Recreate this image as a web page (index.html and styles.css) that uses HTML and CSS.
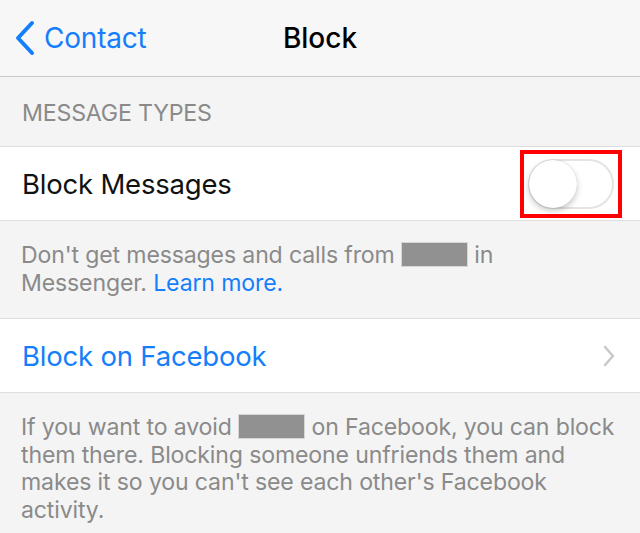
FILE: index.html
```html
<!DOCTYPE html>
<html>
<head>
<meta charset="utf-8">
<link rel="stylesheet" href="styles.css">
</head>
<body>
<header class="nav">
  <a class="back">
    <svg class="back-icon" width="22" height="36" viewBox="0 0 22 36"><path d="M18 3 L4 18 L18 33" fill="none" stroke="#147efb" stroke-width="4" stroke-linecap="round" stroke-linejoin="round"/></svg>
    <span>Contact</span>
  </a>
  <h1 class="title">Block</h1>
  <span></span>
</header>
<div class="section-head">MESSAGE TYPES</div>
<div class="row">
  <span class="row-label">Block Messages</span>
  <span class="highlight">
    <span class="switch"><span class="knob"></span></span>
  </span>
</div>
<p class="footnote">Don't get messages and calls from <span class="redact"></span> in Messenger. <span class="link">Learn more.</span></p>
<div class="row">
  <span class="row-label link">Block on Facebook</span>
  <svg class="chev" width="14" height="24" viewBox="0 0 14 24"><path d="M3 3 L11 12 L3 21" fill="none" stroke="#c7c7cc" stroke-width="2.5" stroke-linecap="round" stroke-linejoin="round"/></svg>
</div>
<p class="footnote">If you want to avoid <span class="redact"></span> on Facebook, you can block them there. Blocking someone unfriends them and makes it so you can't see each other's Facebook activity.</p>
</body>
</html>
```
FILE: styles.css
```css
html, body {
  margin: 0;
  padding: 0;
}
body {
  background: #f4f4f4;
  font-family: Inter, "Liberation Sans", sans-serif;
  width: 640px;
  height: 533px;
  overflow: hidden;
}
.nav {
  height: 76px;
  background: #f7f7f7;
  border-bottom: 1px solid #c9c9c9;
  display: grid;
  grid-template-columns: 1fr auto 1fr;
  align-items: center;
}
.back {
  display: flex;
  align-items: center;
  color: #147efb;
  font-size: 28px;
  padding-left: 14px;
  gap: 8px;
  letter-spacing: -0.2px;
}
.title {
  margin: 0;
  font-size: 28px;
  font-weight: 500;
  color: #000;
}
.section-head {
  height: 70px;
  box-sizing: border-box;
  padding: 22px 0 0 22px;
  font-size: 23.2px;
  color: #8a8a8a;
  border-bottom: 1px solid #dedede;
  letter-spacing: -0.2px;
}
.row {
  height: 73px;
  background: #fff;
  border-bottom: 1px solid #dedede;
  display: flex;
  align-items: center;
  justify-content: space-between;
  padding: 0 26px 0 22px;
}
.row-label {
  font-size: 27.5px;
  color: #111;
  letter-spacing: -0.2px;
}
.link {
  color: #147efb;
}
.highlight {
  display: flex;
  align-items: center;
  justify-content: center;
  width: 102px;
  height: 68px;
  box-sizing: border-box;
  border: 4px solid #ff0000;
  margin-right: -8px;
}
.switch {
  position: relative;
  width: 86px;
  height: 50px;
  box-sizing: border-box;
  border: 2px solid #e4e4e4;
  border-radius: 25px;
  background: #fff;
}
.knob {
  position: absolute;
  left: -1px;
  top: -1px;
  width: 48px;
  height: 48px;
  border-radius: 50%;
  background: #fff;
  box-shadow: 0 3px 6px rgba(0,0,0,0.22), 0 0 1px rgba(0,0,0,0.2);
}
.footnote {
  margin: 0;
  padding: 21px 20px 21px 21px;
  font-size: 23.1px;
  line-height: 27.5px;
  color: #8a8a8a;
  border-bottom: 1px solid #dedede;
  letter-spacing: -0.15px;
}
.footnote:last-child {
  border-bottom: none;
}
.redact {
  display: inline-block;
  width: 65px;
  height: 23px;
  background: #919191;
  border: 1px solid #d6d6d6;
  vertical-align: -4px;
}
.chev {
  margin-right: -2px;
}
```
